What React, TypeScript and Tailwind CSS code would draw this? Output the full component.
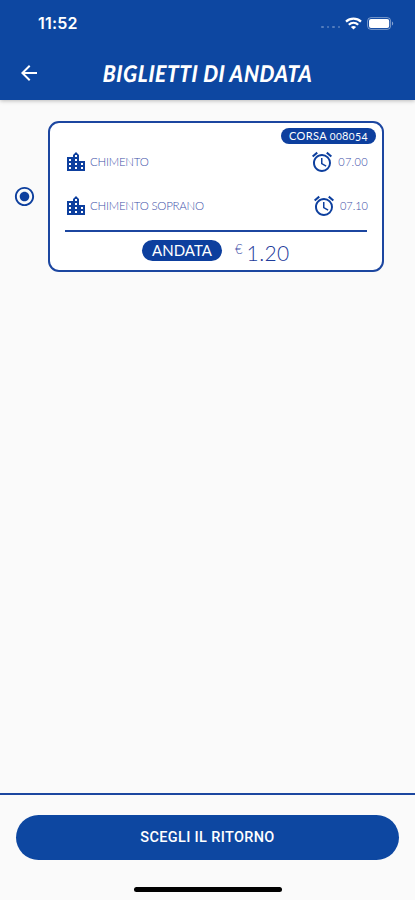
import React from 'react';
import { MdAlarm, MdArrowBack, MdLocationCity, MdRadioButtonChecked } from 'react-icons/md';

interface Stop {
    name: string;
    time: string;
    timeClass: string;
}

const stops: Stop[] = [
    { name: 'CHIMENTO', time: '07.00', timeClass: 'tracking-[0.35px]' },
    { name: 'CHIMENTO SOPRANO', time: '07.10', timeClass: 'tracking-[0px]' },
];

const StatusBar = () => (
    <div className="flex h-[46px] items-center justify-between pl-[38px] pr-[21px] font-['Inter']">
        <span className="text-[16px] font-semibold leading-none tracking-[0.2px]">11:52</span>
        <div className="flex items-center">
            <div className="mt-2 mr-[5px] flex gap-[3px]">
                {[0, 1, 2, 3].map((i) => (
                    <span key={i} className="size-[2.5px] rounded-full bg-white/30" />
                ))}
            </div>
            <WifiIcon />
            <BatteryIcon />
        </div>
    </div>
);

const Header = () => (
    <header className="relative z-10 h-[100px] shrink-0 bg-[#0d47a1] text-white shadow-[0_1px_4px_rgba(0,0,0,0.25)]">
        <StatusBar />
        <div className="flex h-[54px] items-center pl-[17px]">
            <button aria-label="Indietro">
                <MdArrowBack size={24} />
            </button>
            <h1 className="ml-[62px] origin-left scale-x-[0.9] -skew-x-3 whitespace-nowrap font-['Lato'] text-[23px] font-black italic leading-none tracking-[0.75px]">
                BIGLIETTI DI ANDATA
            </h1>
        </div>
    </header>
);

const StopRow = ({ stop }: { stop: Stop }) => (
    <div className="flex h-6 items-center justify-between font-['Lato'] font-light leading-none text-[#3c4fa8]">
        <div className="flex items-center gap-[2px]">
            <MdLocationCity size={24} className="text-[#0d3f9e]" />
            <span className="text-[11.5px] tracking-[-0.25px]">{stop.name}</span>
        </div>
        <div className="flex items-center gap-1">
            <MdAlarm size={24} className="text-[#0d3f9e]" />
            <span className={`text-[11px] ${stop.timeClass}`}>{stop.time}</span>
        </div>
    </div>
);

const TicketCard = () => (
    <div className="h-[151px] w-[336px] rounded-[11px] border-2 border-[#1c46a0] bg-white pt-[5px] font-['Lato']">
        <div className="flex justify-end pr-[6px]">
            <span className="flex h-4 w-[95px] items-baseline justify-center rounded-full bg-[#0d3f9e] text-[11px] leading-[16px] tracking-[0.35px] text-white">
                CORSA&nbsp;<OldStyleNumber value="008054" />
            </span>
        </div>
        <div className="mt-[5.5px] flex flex-col gap-5 pl-[14px] pr-[14px]">
            {stops.map((stop) => (
                <StopRow key={stop.name} stop={stop} />
            ))}
        </div>
        <div className="mx-[15px] mt-[12.5px] h-[2px] bg-[#1c46a0]" />
        <div className="mt-2 flex h-[21px] items-center pl-[92px]">
            <span className="flex h-[21px] w-20 items-center justify-center rounded-full bg-[#0d3f9e] text-[15px] leading-none text-white">
                ANDATA
            </span>
            <span className="mb-[2px] ml-[13px] text-[13px] font-light leading-none text-[#3c4fa8]">€</span>
            <span className="ml-1 mt-[3px] text-[21px] font-light leading-none tracking-[0.4px] text-[#1f3d9c]">1.20</span>
        </div>
    </div>
);

// Digits 3, 4, 5, 7 and 9 hang below the baseline, 6 and 8 rise above it
const OldStyleNumber = ({ value }: { value: string }) => (
    <span className="inline-flex items-baseline">
        {value.split('').map((digit, i) => (
            <span
                key={i}
                className={
                    '68'.includes(digit)
                        ? 'text-[11px]'
                        : '34579'.includes(digit)
                            ? 'relative top-[1px] text-[10.5px]'
                            : 'text-[10px]'
                }
            >
                {digit}
            </span>
        ))}
    </span>
);

export default function App() {
    return (
        <div className="flex h-[900px] w-[415px] flex-col overflow-hidden bg-[#fafafa]">
            <Header />

            <main className="flex-1 pt-[21px]">
                <div className="flex items-center pl-[13px]">
                    <MdRadioButtonChecked size={23} className="mr-3 shrink-0 text-[#0d3f9e]" />
                    <TicketCard />
                </div>
            </main>

            <footer className="flex h-[107px] shrink-0 flex-col items-center border-t-2 border-[#1c46a0] px-4 pt-5">
                <button className="h-[45px] w-full rounded-full bg-[#0d47a1] pt-[2px] font-['Roboto'] text-[14.5px] font-medium leading-none tracking-[0.35px] text-white">
                    SCEGLI IL RITORNO
                </button>
                <div className="mt-[27px] h-[5px] w-[148px] rounded-full bg-black" />
            </footer>
        </div>
    );
}

const WifiIcon = () => (
    <svg width="17" height="13" viewBox="0 0 17 13" fill="none" stroke="white" strokeWidth="2.2">
        <path d="M1 4.6C5.2 0.6 11.8 0.6 16 4.6" />
        <path d="M3.8 7.7C6.5 5.2 10.5 5.2 13.2 7.7" />
        <path d="M8.5 12.6L5.9 10C7.4 8.7 9.6 8.7 11.1 10Z" fill="white" stroke="none" />
    </svg>
);

const BatteryIcon = () => (
    <svg className="ml-[5px]" width="27" height="13" viewBox="0 0 27 13" fill="none">
        <rect x="0.6" y="0.6" width="23" height="11.8" rx="3.4" stroke="white" strokeOpacity="0.45" />
        <rect x="2" y="2" width="20.2" height="9" rx="2" fill="white" />
        <path d="M25 4.5C26.6 5 26.6 8 25 8.5Z" fill="white" fillOpacity="0.5" />
    </svg>
);
